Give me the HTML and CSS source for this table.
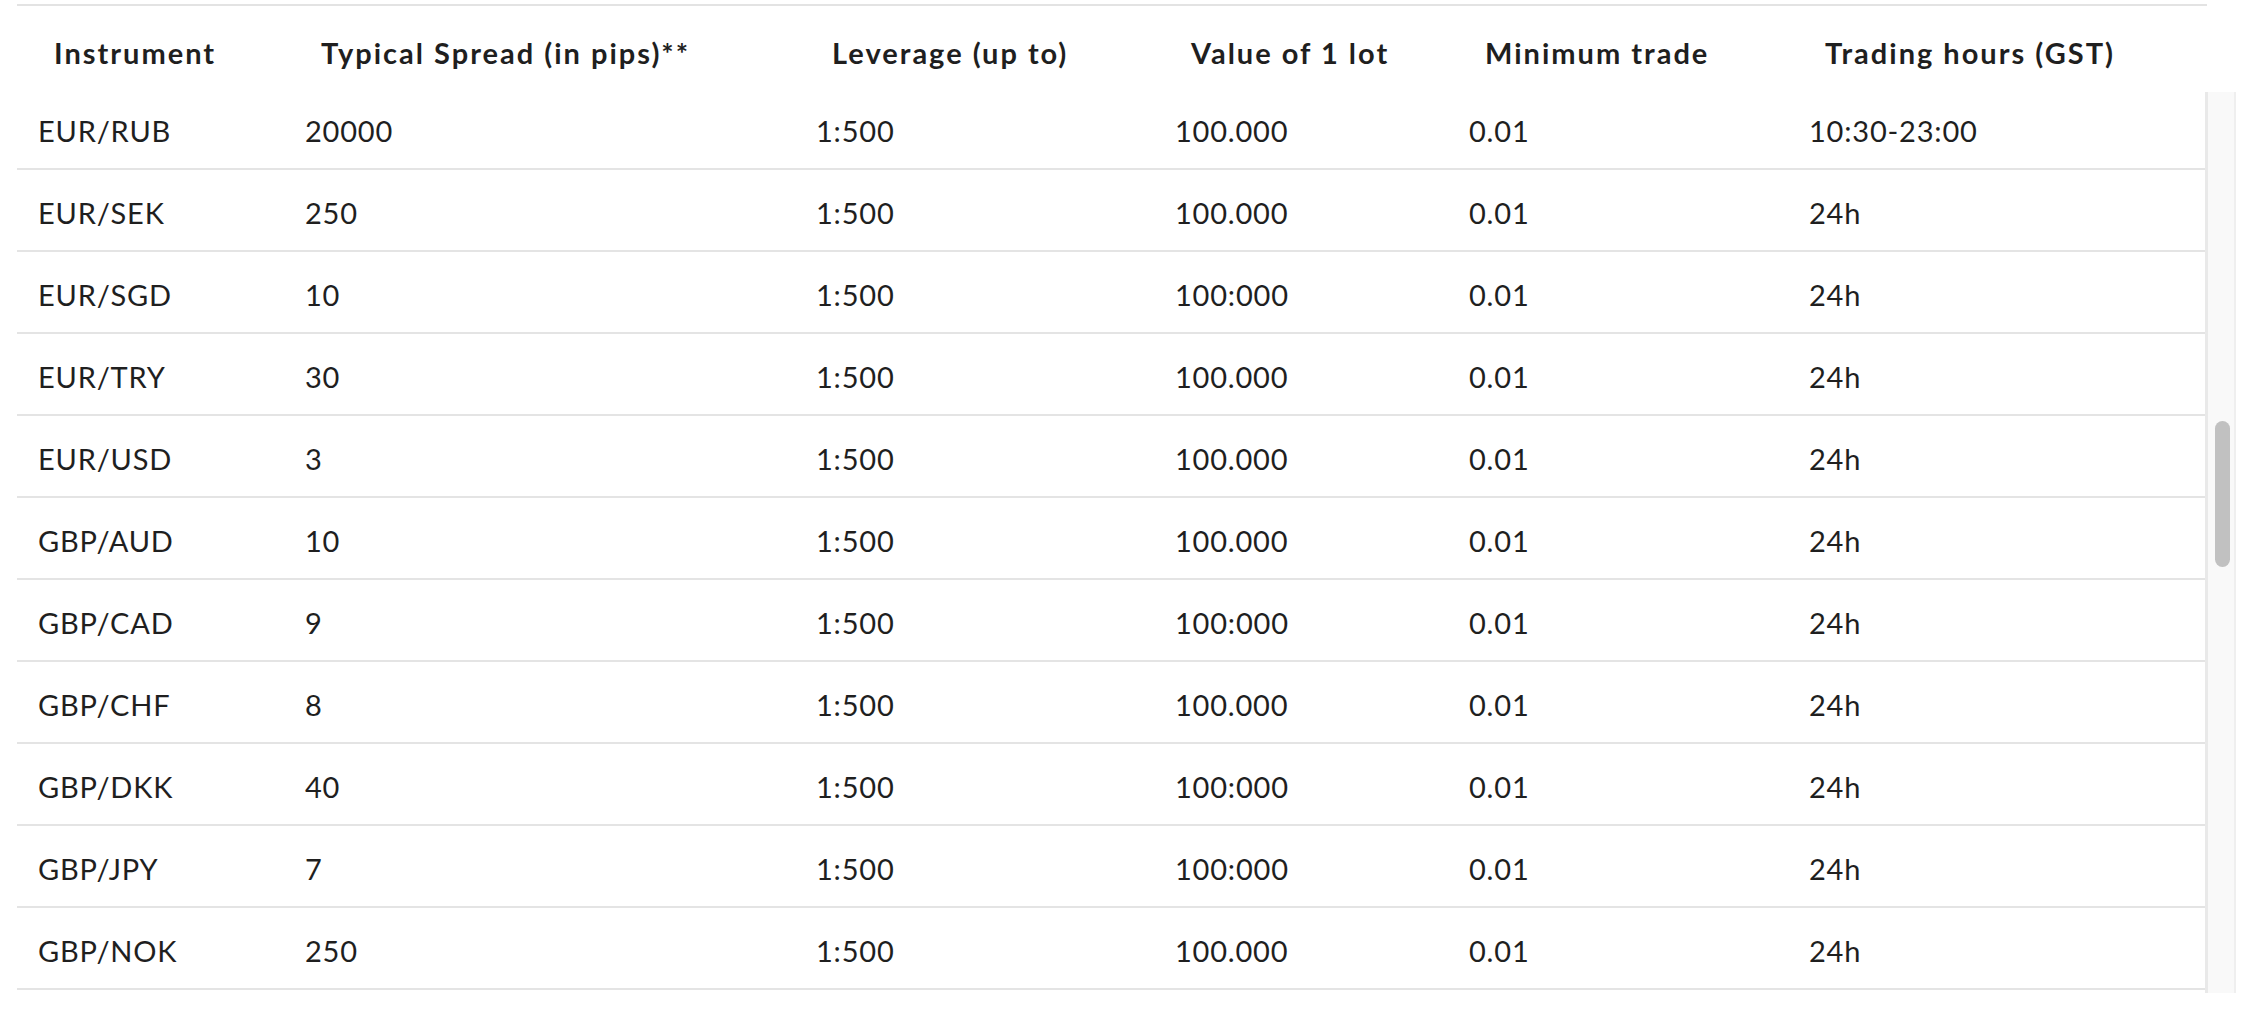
FILE: index.html
```html
<!DOCTYPE html>
<html lang="en">
<head>
<meta charset="utf-8">
<title>Forex instruments</title>
<link rel="stylesheet" href="styles.css">
</head>
<body>
<div class="frame">
  <div class="thead grid">
    <div class="th">Instrument</div>
    <div class="th">Typical Spread (in pips)**</div>
    <div class="th">Leverage (up to)</div>
    <div class="th">Value of 1 lot</div>
    <div class="th">Minimum trade</div>
    <div class="th">Trading hours (GST)</div>
  </div>
  <div class="tbody">
    <div class="rows">
      <div class="row grid"><div class="td">EUR/RUB</div><div class="td">20000</div><div class="td">1:500</div><div class="td">100.000</div><div class="td">0.01</div><div class="td">10:30-23:00</div></div>
      <div class="row grid"><div class="td">EUR/SEK</div><div class="td">250</div><div class="td">1:500</div><div class="td">100.000</div><div class="td">0.01</div><div class="td">24h</div></div>
      <div class="row grid"><div class="td">EUR/SGD</div><div class="td">10</div><div class="td">1:500</div><div class="td">100:000</div><div class="td">0.01</div><div class="td">24h</div></div>
      <div class="row grid"><div class="td">EUR/TRY</div><div class="td">30</div><div class="td">1:500</div><div class="td">100.000</div><div class="td">0.01</div><div class="td">24h</div></div>
      <div class="row grid"><div class="td">EUR/USD</div><div class="td">3</div><div class="td">1:500</div><div class="td">100.000</div><div class="td">0.01</div><div class="td">24h</div></div>
      <div class="row grid"><div class="td">GBP/AUD</div><div class="td">10</div><div class="td">1:500</div><div class="td">100.000</div><div class="td">0.01</div><div class="td">24h</div></div>
      <div class="row grid"><div class="td">GBP/CAD</div><div class="td">9</div><div class="td">1:500</div><div class="td">100:000</div><div class="td">0.01</div><div class="td">24h</div></div>
      <div class="row grid"><div class="td">GBP/CHF</div><div class="td">8</div><div class="td">1:500</div><div class="td">100.000</div><div class="td">0.01</div><div class="td">24h</div></div>
      <div class="row grid"><div class="td">GBP/DKK</div><div class="td">40</div><div class="td">1:500</div><div class="td">100:000</div><div class="td">0.01</div><div class="td">24h</div></div>
      <div class="row grid"><div class="td">GBP/JPY</div><div class="td">7</div><div class="td">1:500</div><div class="td">100:000</div><div class="td">0.01</div><div class="td">24h</div></div>
      <div class="row grid"><div class="td">GBP/NOK</div><div class="td">250</div><div class="td">1:500</div><div class="td">100.000</div><div class="td">0.01</div><div class="td">24h</div></div>
    </div>
    <div class="scrollbar"><div class="thumb"></div></div>
  </div>
</div>
</body>
</html>
```
FILE: styles.css
```css
html, body {
  margin: 0;
  padding: 0;
  background: #ffffff;
}
body {
  font-family: "Lato", "Liberation Sans", sans-serif;
  color: #1f1f1f;
  width: 2242px;
  height: 1026px;
  overflow: hidden;
}
.frame {
  margin: 4px 0 0 17px;
  width: 2219px;
}
.grid {
  display: grid;
  grid-template-columns: 267px 511px 359px 294px 340px 1fr;
  align-items: center;
}
.thead {
  width: 2190px;
  height: 84px;
  box-sizing: border-box;
  border-top: 2px solid #e3e3e3;
  padding-top: 10px;
}
.th {
  padding-left: 37px;
  font-size: 29px;
  font-weight: 700;
  letter-spacing: 2px;
  white-space: nowrap;
}
.tbody {
  display: flex;
  height: 905px;
  overflow: hidden;
}
.rows {
  width: 2188px;
  flex: none;
}
.row {
  height: 82px;
  box-sizing: border-box;
  border-bottom: 2px solid #e4e4e4;
  padding-top: 4px;
}
.td {
  padding-left: 21px;
  font-size: 29px;
  font-weight: 400;
  letter-spacing: 0.8px;
  white-space: nowrap;
}
.scrollbar {
  flex: none;
  width: 31px;
  box-sizing: border-box;
  margin-top: 4px;
  background: #f9f9f9;
  border-left: 3px solid #e9e9e9;
  border-right: 2px solid #efefef;
}
.thumb {
  margin: 329px 0 0 7px;
  width: 15px;
  height: 146px;
  border-radius: 8px;
  background: #c1c1c1;
}
```
